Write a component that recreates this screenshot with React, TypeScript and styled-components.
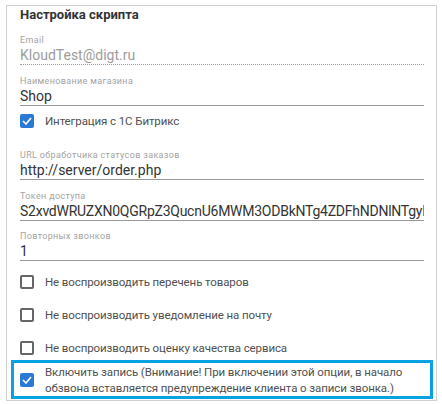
import React from "react";
import styled, { createGlobalStyle } from "styled-components";

const Global = createGlobalStyle`
  html, body { margin: 0; padding: 0; background: #fff; }
  body { font-family: Roboto, "Noto Sans", sans-serif; }
`;

const Panel = styled.div`
  margin: 5px 0 0 6px;
  width: 431px;
  border: 1px solid #d0d0d0;
  box-sizing: border-box;
  padding: 1px 12px 1px 13px;
  display: flex;
  flex-direction: column;
`;

const Title = styled.div`
  font-size: 13px;
  font-weight: 700;
  color: #333;
  line-height: 16px;
`;

const Field = styled.div<{ $top?: number }>`
  display: flex;
  flex-direction: column;
  margin-top: ${(p) => p.$top ?? 11}px;
`;

const Label = styled.div`
  font-size: 9px;
  letter-spacing: 0.35px;
  color: #a3a3a3;
  line-height: 10px;
`;

const Value = styled.div<{ $muted?: boolean; $dotted?: boolean; $tight?: boolean }>`
  font-size: 14px;
  line-height: 17px;
  padding-top: 2px;
  color: ${(p) => (p.$muted ? "#9d9d9d" : "#333")};
  letter-spacing: ${(p) => (p.$tight ? "-0.25px" : "0")};
  border-bottom: 1px ${(p) => (p.$dotted ? "dotted" : "solid")} #999;
  white-space: nowrap;
  overflow: hidden;
`;

const CheckRow = styled.label<{ $h: number; $top: number }>`
  display: flex;
  align-items: center;
  gap: 11px;
  height: ${(p) => p.$h}px;
  margin-top: ${(p) => p.$top}px;
  font-size: 11.5px;
  letter-spacing: -0.1px;
  color: #505050;
`;

const Box = styled.span<{ $checked?: boolean }>`
  flex: none;
  width: 14px;
  height: 14px;
  box-sizing: border-box;
  border-radius: 2px;
  border: ${(p) => (p.$checked ? "none" : "2px solid #666")};
  background: ${(p) => (p.$checked ? "#2a7ad5" : "#fff")};
  display: flex;
  align-items: center;
  justify-content: center;
`;

const Highlight = styled.div`
  margin: 0 -9px 0 -9px;
  border: 3px solid #08a2e2;
  padding: 1px 6px 0 6px;
  display: flex;
  align-items: center;
  gap: 11px;
  font-size: 11.5px;
  letter-spacing: -0.1px;
  line-height: 16px;
  color: #505050;
`;

const Check = ({ checked }: { checked?: boolean }) => (
  <Box $checked={checked}>
    {checked && (
      <svg width="10" height="8" viewBox="0 0 10 8">
        <path d="M1 4 L4 7 L9 1" fill="none" stroke="#fff" strokeWidth="1.6" />
      </svg>
    )}
  </Box>
);

export default function App() {
  return (
    <>
      <Global />
      <Panel>
        <Title>Настройка скрипта</Title>
        <Field $top={12}>
          <Label>Email</Label>
          <Value $muted $dotted>KloudTest@digt.ru</Value>
        </Field>
        <Field>
          <Label>Наименование магазина</Label>
          <Value>Shop</Value>
        </Field>
        <CheckRow $h={30} $top={0}>
          <Check checked />
          Интеграция с 1С Битрикс
        </CheckRow>
        <Field $top={14}>
          <Label>URL обработчика статусов заказов</Label>
          <Value>http://server/order.php</Value>
        </Field>
        <Field>
          <Label>Токен доступа</Label>
          <Value $tight>S2xvdWRUZXN0QGRpZ3QucnU6MWM3ODBkNTg4ZDFhNDNlNTgyNjU5</Value>
        </Field>
        <Field $top={10}>
          <Label>Повторных звонков</Label>
          <Value>1</Value>
        </Field>
        <CheckRow $h={24} $top={9}>
          <Check />
          Не воспроизводить перечень товаров
        </CheckRow>
        <CheckRow $h={24} $top={9}>
          <Check />
          Не воспроизводить уведомление на почту
        </CheckRow>
        <CheckRow $h={24} $top={9}>
          <Check />
          Не воспроизводить оценку качества сервиса
        </CheckRow>
        <Highlight>
          <Check checked />
          <span>
            Включить запись (Внимание! При включении этой опции, в начало обзвона вставляется
            предупреждение клиента о записи звонка.)
          </span>
        </Highlight>
      </Panel>
    </>
  );
}
